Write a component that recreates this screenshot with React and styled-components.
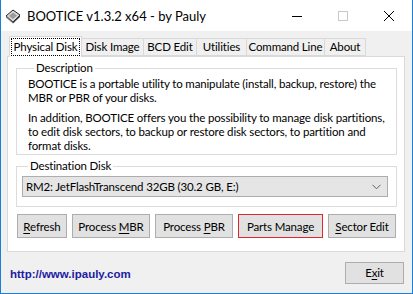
import React from 'react';
import styled, { createGlobalStyle } from 'styled-components';

const GlobalStyle = createGlobalStyle`
  html, body {
    margin: 0;
    padding: 0;
    background: #ffffff;
  }
  body {
    font-family: Lato, "Noto Sans", sans-serif;
    font-size: 11.5px;
    letter-spacing: -0.15px;
    color: #000;
  }
`;

const Window = styled.div`
  width: 413px;
  height: 294px;
  box-sizing: border-box;
  border: 1px solid #1a7fd6;
  border-top: none;
  background: #f0f0f0;
  display: flex;
  flex-direction: column;
`;

const TitleBar = styled.div`
  height: 31px;
  flex: none;
  background: #fff;
  display: flex;
  align-items: center;
`;

const AppIcon = styled.svg`
  margin-left: 4px;
  width: 16px;
  height: 16px;
`;

const Title = styled.div`
  margin-left: 6px;
  font-size: 13px;
  letter-spacing: 0;
  flex: 1;
`;

const CaptionButton = styled.div`
  width: 46px;
  height: 31px;
  display: flex;
  align-items: center;
  justify-content: center;
`;

const Body = styled.div`
  flex: 1;
  display: flex;
  flex-direction: column;
  padding: 4px 7px 0 6px;
`;

const TabStrip = styled.div`
  display: flex;
  align-items: flex-end;
  height: 21px;
  padding-left: 3px;
  position: relative;
  z-index: 1;
`;

const Tab = styled.div`
  box-sizing: border-box;
  width: ${p => p.$w}px;
  height: ${p => (p.$active ? 21 : 18)}px;
  margin-bottom: ${p => (p.$active ? -1 : 0)}px;
  margin-left: -1px;
  border: 1px solid #d9d9d9;
  border-bottom: ${p => (p.$active ? 'none' : '1px solid #d9d9d9')};
  background: ${p => (p.$active ? '#fff' : '#f0f0f0')};
  display: flex;
  align-items: center;
  justify-content: center;
  line-height: 14px;
  white-space: nowrap;
`;

const FocusLabel = styled.span`
  outline: 1px dotted #000;
  padding: 1px 2px;
`;

const Panel = styled.div`
  box-sizing: border-box;
  height: 196px;
  background: #fff;
  border: 1px solid #d9d9d9;
  padding: 3px 7px 0 8px;
  display: flex;
  flex-direction: column;
`;

const Group = styled.fieldset`
  margin: ${p => p.$top}px 0 0 0;
  padding: ${p => p.$pad};
  border: 1px solid #dcdcdc;
  line-height: 14px;
  min-width: 0;
`;

const Legend = styled.legend`
  padding: 0 2px;
  margin-left: 6px;
  line-height: 14px;
`;

const Para = styled.p`
  margin: ${p => (p.$first ? 0 : 6)}px 0 0 0;
  white-space: nowrap;
`;

const Combo = styled.div`
  box-sizing: border-box;
  height: 21px;
  border: 1px solid #adadad;
  background: #e5e5e5;
  display: flex;
  align-items: center;
  padding: 0 6px 0 3px;
`;

const ComboText = styled.span`
  flex: 1;
  white-space: nowrap;
`;

const ButtonRow = styled.div`
  display: flex;
  gap: 5px;
  margin: 7px 0 0 1px;
`;

const Button = styled.div`
  box-sizing: border-box;
  width: ${p => p.$w}px;
  height: ${p => p.$h || 24}px;
  border: 1px solid ${p => (p.$focus ? '#e0282e' : '#adadad')};
  background: #e1e1e1;
  display: flex;
  align-items: center;
  justify-content: center;
  white-space: nowrap;
`;

const Key = styled.u`
  text-decoration-thickness: 1px;
  text-underline-offset: 2px;
`;

const Footer = styled.div`
  flex: 1;
  display: flex;
  align-items: center;
  justify-content: space-between;
  padding: 0 1px 0 3px;
`;

const Link = styled.span`
  font-family: "Liberation Sans", Arial, sans-serif;
  font-weight: bold;
  font-size: 11.5px;
  letter-spacing: 0;
  color: #1c1ca3;
  margin-top: 2px;
`;

const Chevron = () => (
  <svg width="9" height="6" viewBox="0 0 9 6">
    <path d="M0.5 0.8 L4.5 4.8 L8.5 0.8" fill="none" stroke="#606060" strokeWidth="1" />
  </svg>
);

const tabs = [
  { label: 'Physical Disk', w: 73, active: true },
  { label: 'Disk Image', w: 63 },
  { label: 'BCD Edit', w: 54 },
  { label: 'Utilities', w: 51 },
  { label: 'Command Line', w: 79 },
  { label: 'About', w: 42 },
];

export default function App() {
  return (
    <>
      <GlobalStyle />
      <Window>
        <TitleBar>
          <AppIcon viewBox="0 0 16 16">
            <path d="M1 8 L8 2 L15 7 L8 14 Z" fill="#d8d8d8" stroke="#202020" strokeWidth="1" />
            <path d="M8 14 L15 7 L15 9 L8 15.5 Z" fill="#404040" />
            <path d="M1 8 L8 14 L8 15.5 L1 9.5 Z" fill="#707070" />
            <path d="M4 8 L8 4.5 L12 7.5 L8 11 Z" fill="#9a9a9a" />
          </AppIcon>
          <Title>BOOTICE v1.3.2 x64 - by Pauly</Title>
          <CaptionButton>
            <svg width="10" height="10" viewBox="0 0 10 10">
              <path d="M0 5.5 H10" stroke="#000" strokeWidth="1" />
            </svg>
          </CaptionButton>
          <CaptionButton>
            <svg width="10" height="10" viewBox="0 0 10 10">
              <rect x="0.5" y="0.5" width="9" height="9" fill="none" stroke="#c8c8c8" strokeWidth="1" />
            </svg>
          </CaptionButton>
          <CaptionButton>
            <svg width="10" height="10" viewBox="0 0 10 10">
              <path d="M0 0 L10 10 M10 0 L0 10" stroke="#000" strokeWidth="1" />
            </svg>
          </CaptionButton>
        </TitleBar>
        <Body>
          <TabStrip>
            {tabs.map(t => (
              <Tab key={t.label} $w={t.w} $active={t.active}>
                {t.active ? <FocusLabel>{t.label}</FocusLabel> : t.label}
              </Tab>
            ))}
          </TabStrip>
          <Panel>
            <Group $top={1} $pad="2px 8px 1px 11px">
              <Legend>Description</Legend>
              <Para $first>
                BOOTICE is a portable utility to manipulate (install, backup, restore) the
                <br />
                MBR or PBR of your disks.
              </Para>
              <Para>
                In addition, BOOTICE offers you the possibility to manage disk partitions,
                <br />
                to edit disk sectors, to backup or restore disk sectors, to partition and
                <br />
                format disks.
              </Para>
            </Group>
            <Group $top={4} $pad="3px 8px 9px 5px">
              <Legend>Destination Disk</Legend>
              <Combo>
                <ComboText>RM2: JetFlashTranscend 32GB (30.2 GB, E:)</ComboText>
                <Chevron />
              </Combo>
            </Group>
            <ButtonRow>
              <Button $w={50}><span><Key>R</Key>efresh</span></Button>
              <Button $w={78}><span>Process <Key>M</Key>BR</span></Button>
              <Button $w={78}><span>Process <Key>P</Key>BR</span></Button>
              <Button $w={85} $focus>Parts Manage</Button>
              <Button $w={68}><span><Key>S</Key>ector Edit</span></Button>
            </ButtonRow>
          </Panel>
          <Footer>
            <Link>http://www.ipauly.com</Link>
            <Button $w={59} $h={22}><span>E<Key>x</Key>it</span></Button>
          </Footer>
        </Body>
      </Window>
    </>
  );
}
